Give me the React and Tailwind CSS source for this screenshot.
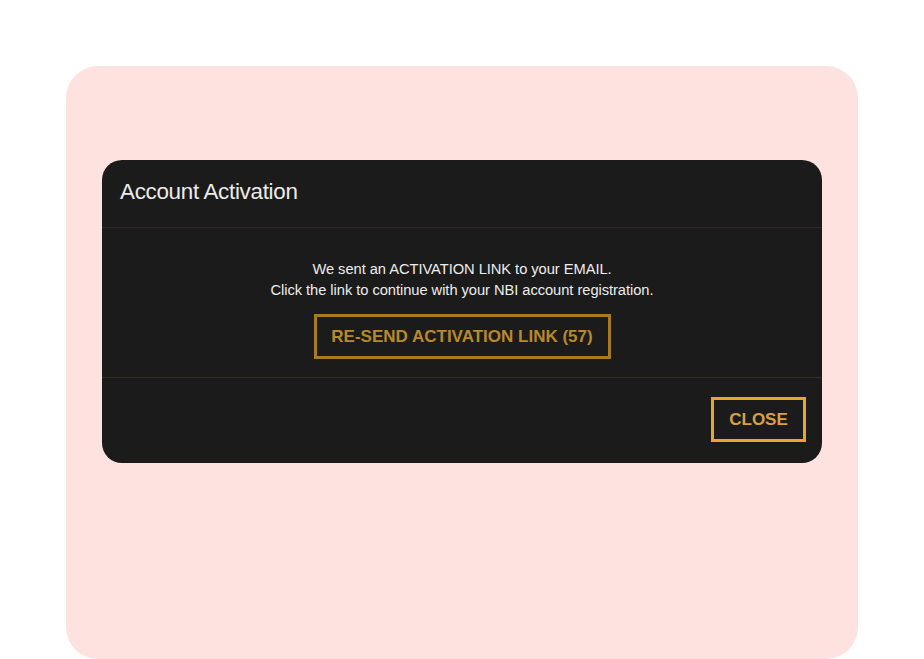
export default function App() {
  return (
    <div className="w-[924px] h-[659px] bg-white overflow-hidden" style={{ fontFamily: '"Liberation Sans", Arial, sans-serif' }}>
      <div className="ml-[66px] mt-[66px] w-[792px] h-[593px] rounded-[32px] bg-[#fee2df] pt-[94px] px-[36px]">
        <div className="w-[720px] rounded-[20px] bg-[#1b1b1b] overflow-hidden">
          <div className="h-[68px] flex items-center pl-[18px] border-b border-[#2e2a1d]">
            <h1 className="text-[22.4px] text-[#ececec] tracking-[-0.3px] mt-[-3px]">Account Activation</h1>
          </div>
          <div className="h-[150px] flex flex-col items-center pt-[31px] border-b border-[#302c1b]">
            <p className="text-[14.7px] leading-[21px] text-[#ededed] text-center tracking-[-0.05px]">
              We sent an ACTIVATION LINK to your EMAIL.
              <br />
              Click the link to continue with your NBI account registration.
            </p>
            <button className="mt-[13px] h-[45px] w-[297px] border-[3px] border-[#a87b22] text-[#b98829] font-bold text-[17px] flex items-center justify-center">
              RE-SEND ACTIVATION LINK (57)
            </button>
          </div>
          <div className="h-[85px] flex justify-end items-start pt-[19px] pr-[16px]">
            <button className="h-[45px] w-[95px] border-[3px] border-[#eaa52c] text-[#d9a043] font-bold text-[17px] flex items-center justify-center">
              CLOSE
            </button>
          </div>
        </div>
      </div>
    </div>
  );
}
